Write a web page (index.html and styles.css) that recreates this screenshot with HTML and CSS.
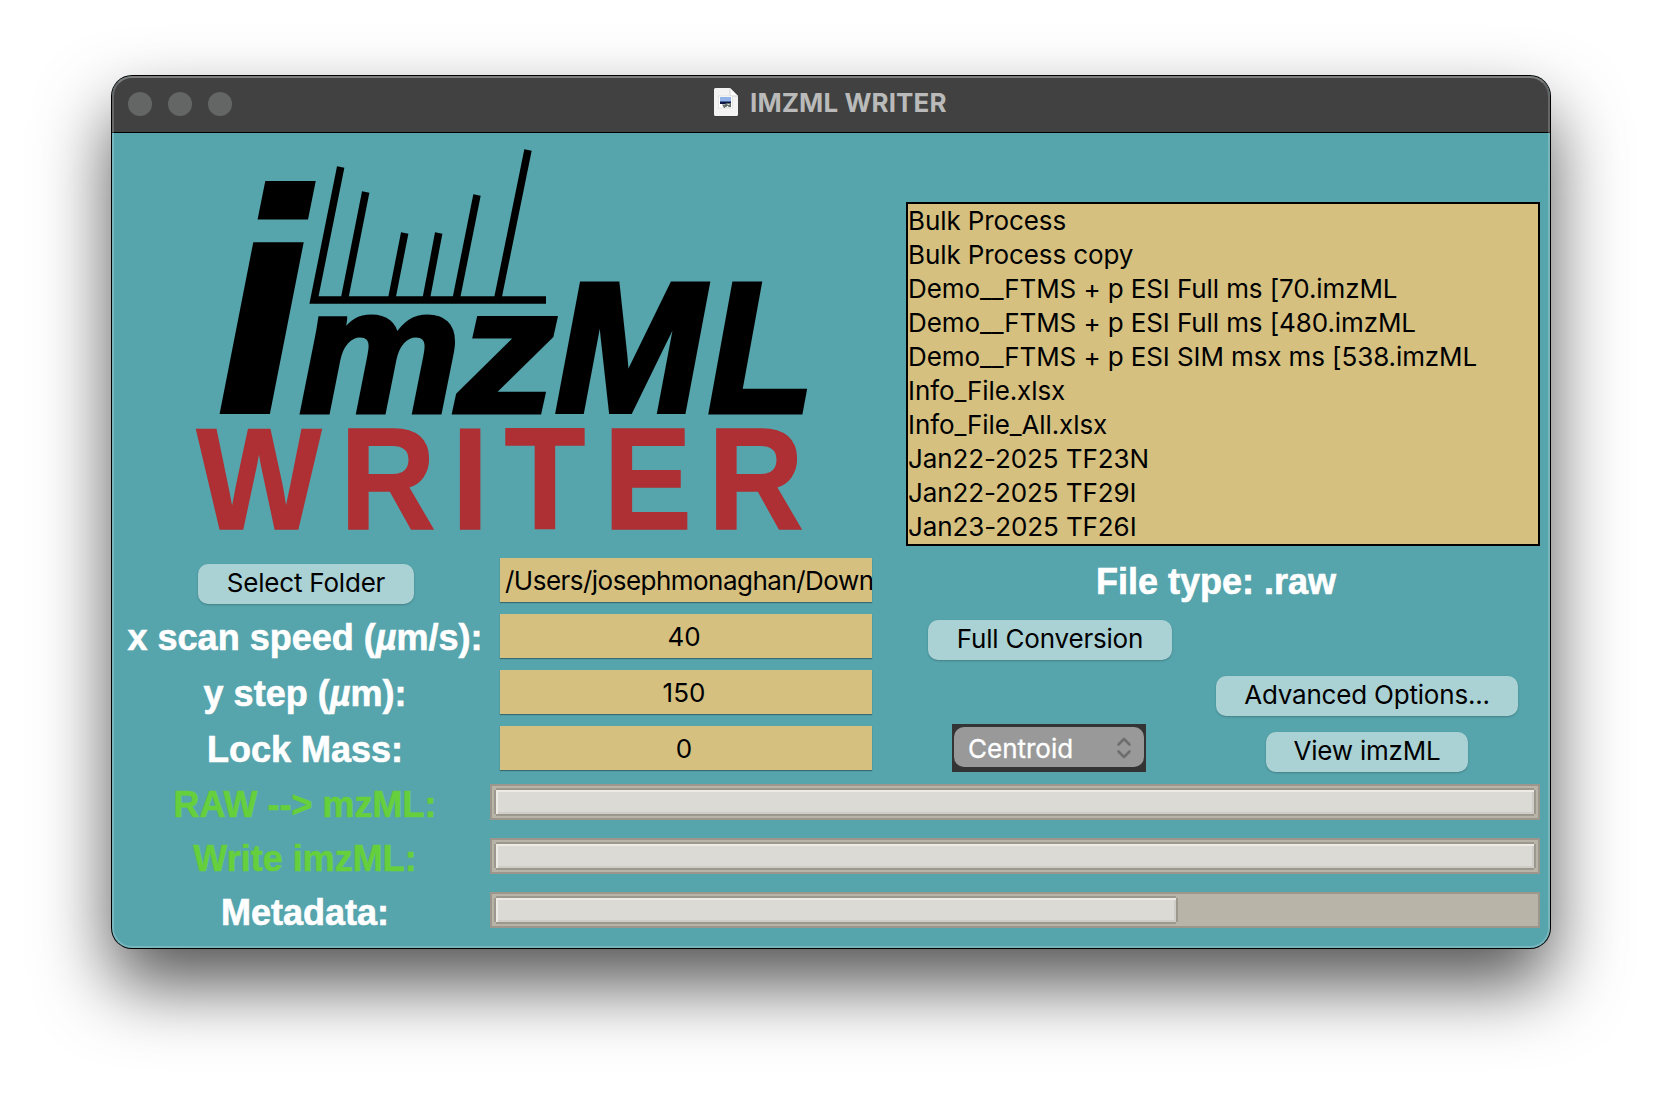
FILE: index.html
```html
<!DOCTYPE html>
<html lang="en">
<head>
<meta charset="utf-8">
<title>IMZML WRITER</title>
<link rel="stylesheet" href="styles.css">
</head>
<body>
<main class="window">
  <header class="titlebar">
    <div class="lights"><span class="light"></span><span class="light"></span><span class="light"></span></div>
    <svg class="doc-icon" width="24" height="29" viewBox="0 0 24 29">
      <path d="M1.500 .8H16l8 8V27a1.300 1.300 0 0 1-1.300 1.300H1.300A1.300 1.300 0 0 1 0 27V2A1.300 1.300 0 0 1 1.500 .8z" fill="#222" opacity=".5"/>
      <path d="M1.500 0H16l8 8v18.500a1.500 1.500 0 0 1-1.500 1.500h-21A1.500 1.500 0 0 1 0 26.500v-25A1.500 1.500 0 0 1 1.500 0z" fill="#f3f3f3"/>
      <path d="M16 0l8 8h-6.500A1.500 1.500 0 0 1 16 6.500z" fill="#fff" stroke="#bbb" stroke-width=".6"/>
      <rect x="4.500" y="8" width="14" height="12" fill="#fff" stroke="#d5d5d5" stroke-width=".6"/>
      <rect x="6" y="9" width="11" height="5" fill="#92b2ea"/>
      <rect x="6" y="13.500" width="11" height="2.500" fill="#0b1747"/>
      <path d="M8 16.500h3l1-1.500h5v5h-2l-1-2h-1l-1 2h-2z" fill="#65706f"/>
      <path d="M13.500 16.500h2M11 19.500h6" stroke="#dfe7e4"/>
    </svg>
    <h1 class="title">IMZML WRITER</h1>
  </header>

  <section class="content">
    <svg class="logo" width="770" height="419" viewBox="112 133 770 419">
      <g class="logo-black">
        <text transform="translate(218.500 410.500) scale(1.010 1)" font-size="312" stroke-width="7">i</text>
        <text transform="translate(299.500 411.500) scale(1.020 1)" font-size="177" stroke-width="5">m</text>
        <text transform="translate(456 411.500) scale(1.130 1)" font-size="177" stroke-width="5">z</text>
        <text transform="translate(555.500 411) scale(.970 1)" font-size="183.500" stroke-width="6">M</text>
        <text transform="translate(708 411.500) scale(.940 1)" font-size="185.500" stroke-width="5">L</text>
      </g>
      <g class="logo-peaks">
        <path d="M340.700 167L314 300H546"/>
        <path d="M365.700 192L344.300 300M404.700 233L391.500 300M438.700 233L426 300M477 195L456 300M528 150L497.500 300"/>
      </g>
      <text class="logo-red" transform="scale(.920 1)" y="529.500" x="213.500 369.500 491 548.500 656 769.500">WRITER</text>
    </svg>
    <ul class="files">
      <li>Bulk Process</li>
      <li>Bulk Process copy</li>
      <li>Demo__FTMS + p ESI Full ms [70.imzML</li>
      <li>Demo__FTMS + p ESI Full ms [480.imzML</li>
      <li>Demo__FTMS + p ESI SIM msx ms [538.imzML</li>
      <li>Info_File.xlsx</li>
      <li>Info_File_All.xlsx</li>
      <li>Jan22-2025 TF23N</li>
      <li>Jan22-2025 TF29I</li>
      <li>Jan23-2025 TF26I</li>
    </ul>

    <div class="cell first"><button class="btn select-folder">Select Folder</button></div>
    <div class="entry path">/Users/josephmonaghan/Down</div>
    <div class="label filetype">File type: .raw</div>

    <div class="label first">x scan speed (<i>µ</i>m/s):</div>
    <div class="entry">40</div>
    <div class="cell third"><button class="btn full">Full Conversion</button></div>
    <div class="cell"></div>

    <div class="label first">y step (<i>µ</i>m):</div>
    <div class="entry">150</div>
    <div class="cell third"></div>
    <div class="cell"><button class="btn advanced">Advanced Options...</button></div>

    <div class="label first">Lock Mass:</div>
    <div class="entry">0</div>
    <div class="cell third">
      <div class="combo"><div class="combo-face">Centroid
        <svg width="16" height="24" viewBox="0 0 16 24"><path d="M2.500 8.500L8 3l5.500 5.500M2.500 15.500L8 21l5.500-5.500" fill="none" stroke="#6e6e6e" stroke-width="2.600" stroke-linecap="round" stroke-linejoin="round"/></svg>
      </div></div>
    </div>
    <div class="cell"><button class="btn view">View imzML</button></div>

    <div class="label first done step">RAW --&gt; mzML:</div>
    <div class="track"><div class="bar" style="width:1038px"></div></div>
    <div class="label first done step">Write imzML:</div>
    <div class="track"><div class="bar" style="width:1038px"></div></div>
    <div class="label first step">Metadata:</div>
    <div class="track"><div class="bar" style="width:680px"></div></div>
  </section>
</main>
</body>
</html>
```
FILE: styles.css
```css
* { box-sizing: border-box; }
body {
  margin: 0;
  height: 1096px;
  overflow: hidden;
  background: #fff;
  padding: 76px 112px;
  font-family: Inter, sans-serif;
  font-size: 26px;
}
.window {
  position: relative;
  width: 1438px;
  height: 872px;
  border-radius: 20px;
  overflow: hidden;
  background: #56a4ac;
  box-shadow: 0 0 0 1px #000, 0 36px 72px rgba(0, 0, 0, .68);
}
/* light rim drawn over the title bar and the content */
.window::after {
  content: "";
  position: absolute;
  inset: 0;
  border: 2px solid rgba(255, 255, 255, .2);
  border-top-color: rgba(255, 255, 255, .32);
  border-radius: 20px;
  pointer-events: none;
}
.titlebar {
  height: 57px;
  display: flex;
  align-items: flex-start;
  background: #404140;
  border-bottom: 1px solid #000;
}
.lights { display: flex; gap: 16px; padding: 16px 0 0 16px; width: 602px; }
.light { width: 24px; height: 24px; border-radius: 50%; background: #646665; }
.doc-icon { margin-top: 12px; }
.title {
  margin: 11px 0 0 12px;
  font-size: 26px;
  line-height: 32px;
  font-weight: 700;
  letter-spacing: .1px;
  color: #b9bab9;
  white-space: nowrap;
}
.content {
  display: grid;
  grid-template-columns: 378px 392px 302px 366px;
  grid-template-rows: 419px repeat(4, 56px) repeat(3, 54px);
}
.logo { grid-column: 1 / 3; display: block; }
.logo-black {
  font-family: "Liberation Sans", Arial, sans-serif;
  font-weight: 700;
  font-style: italic;
  stroke: #000;
}
.logo-peaks { fill: none; stroke: #000; stroke-width: 7.5; }
.logo-red {
  font: 700 144px "Liberation Sans", Arial, sans-serif;
  fill: #ae3034;
  stroke: #ae3034;
  stroke-width: 1.5;
}
.files {
  grid-column: 3 / 5;
  list-style: none;
  margin: 69px 10px 0 24px;
  padding: 0;
  height: 344px;
  border: 2px solid #000;
  background: #d5c080;
  white-space: nowrap;
}
.files li { height: 34px; line-height: 34px; letter-spacing: -.1px; }
.cell { display: flex; align-items: center; justify-content: center; }
.first { padding-left: 10px; }
.third { padding-left: 34px; }
.btn {
  height: 40px;
  margin-top: 8px;
  padding: 0 0 3px;
  border: 0;
  border-radius: 10px;
  background: #aad2d5;
  box-shadow: 0 1px 2px rgba(0, 0, 0, .22);
  color: #000;
  font: 26px Inter, sans-serif;
  letter-spacing: -.2px;
  white-space: nowrap;
}
.select-folder { width: 216px; }
.full { width: 244px; }
.advanced { width: 302px; }
.view { width: 202px; }
.entry {
  margin: 6px 10px;
  height: 44px;
  line-height: 46px;
  background: #d5c080;
  box-shadow: 0 1px 1px rgba(0, 0, 0, .35);
  text-align: center;
  padding-right: 4px;
  overflow: hidden;
  white-space: nowrap;
}
.path { text-align: left; padding: 0 0 0 5px; letter-spacing: -.52px; }
.label {
  padding-top: 2px;
  font: 700 36px/56px "Liberation Sans", Arial, sans-serif;
  color: #fff;
  -webkit-text-stroke: .6px currentColor;
  text-align: center;
  white-space: nowrap;
}
.label.first { padding-left: 8px; }
.filetype { grid-column: 3 / 5; }
.done { color: #65cf3c; }
.step { padding-top: 1px; }
.combo {
  width: 194px;
  height: 48px;
  margin-right: 2px;
  padding: 3px 2px 5px;
  background: #343434;
}
.combo-face {
  height: 40px;
  display: flex;
  align-items: center;
  justify-content: space-between;
  padding: 2px 12px 0 14px;
  border-radius: 10px;
  background: #999;
  color: #fff;
  -webkit-text-stroke: .3px #fff;
}
.track {
  grid-column: 2 / 5;
  height: 36px;
  margin: 8px 10px 10px 0;
  padding: 4px;
  border: 2px solid #9d968d;
  background: #b8b4a8;
}
.bar {
  height: 24px;
  background: #dbdad5;
  box-shadow: 2px 0 #9c988e, -2px 0 #9c988e, 0 2px #9c988e, 0 -2px #9c988e,
    inset 2px 2px #eeebe7, inset -2px -2px #cfcdc7;
}
```
